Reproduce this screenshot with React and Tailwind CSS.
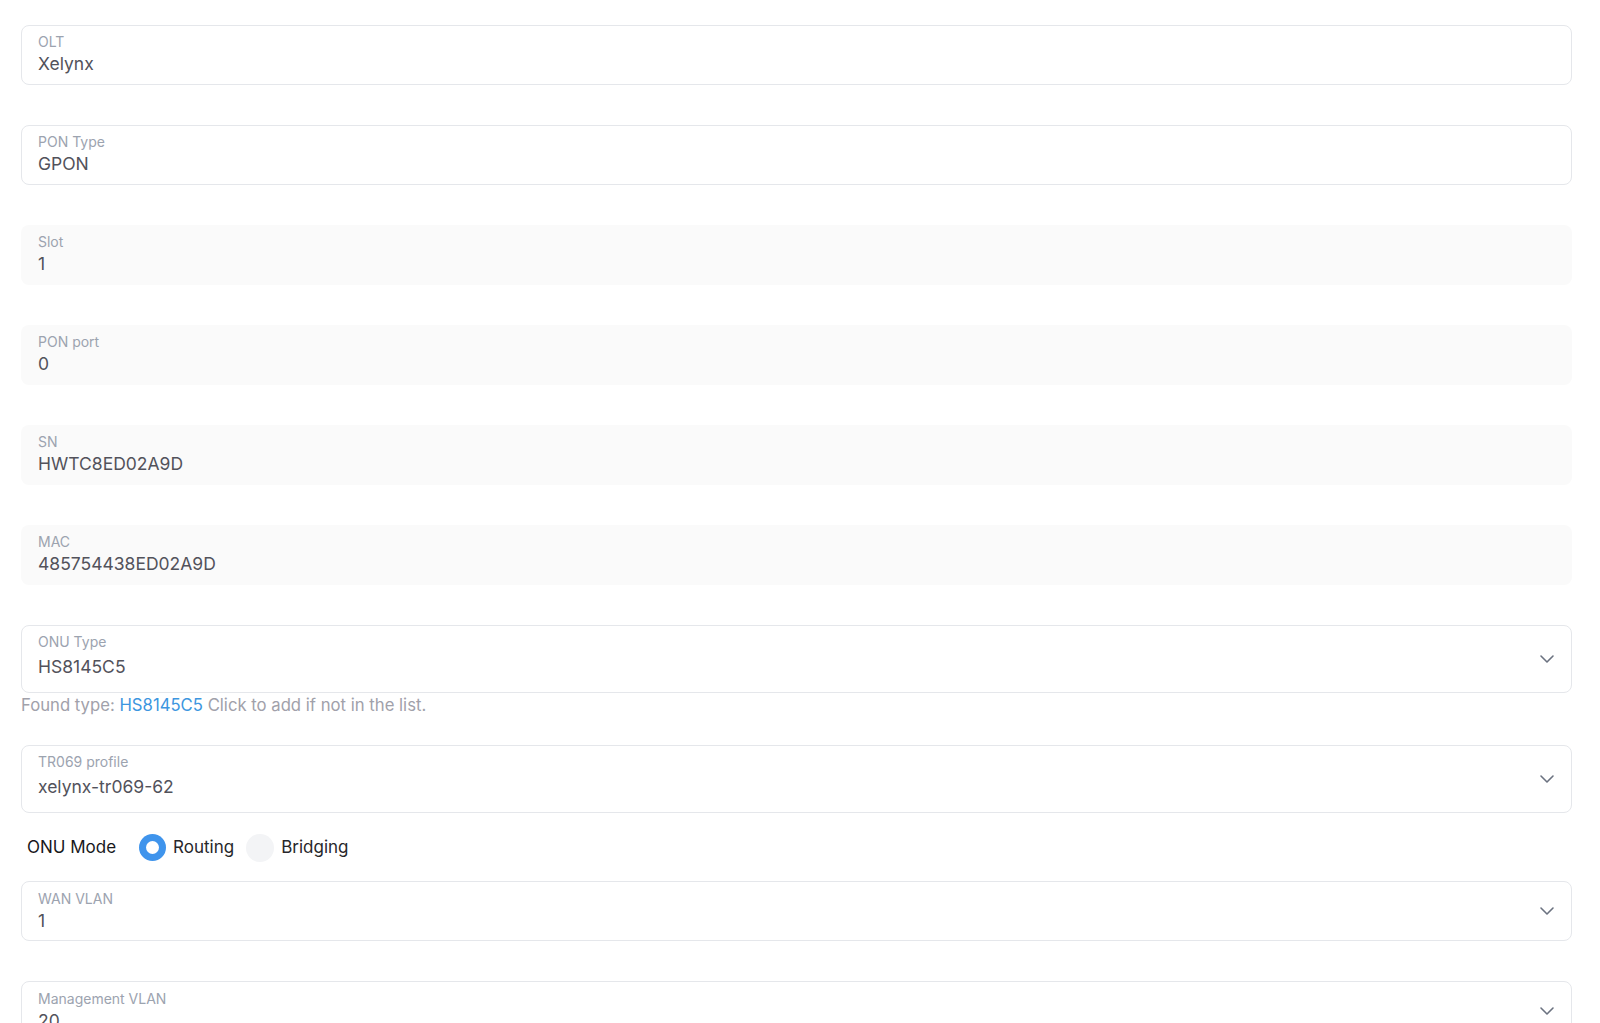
import { ChevronDown } from 'lucide-react'

const readOnly = [
  { label: 'OLT', value: 'Xelynx', bordered: true },
  { label: 'PON Type', value: 'GPON', bordered: true },
  { label: 'Slot', value: '1' },
  { label: 'PON port', value: '0' },
  { label: 'SN', value: 'HWTC8ED02A9D' },
  { label: 'MAC', value: '485754438ED02A9D' },
]

function StaticField({ label, value, bordered }) {
  return (
    <div
      className={`h-[60px] rounded-lg border px-4 pt-[6px] ${
        bordered ? 'border-[#e5e7eb] bg-white' : 'border-transparent bg-[#fafafa]'
      }`}
    >
      <div className="text-[14px] leading-5 text-[#9ca3af]">{label}</div>
      <div className="text-[17.5px] leading-6 text-[#52525b]">{value}</div>
    </div>
  )
}

function SelectField({ label, value, tall }) {
  return (
    <div
      className={`flex items-start justify-between rounded-lg border border-[#e5e7eb] bg-white pl-4 pr-3 ${
        tall ? 'h-[68px] pt-[6px]' : 'h-[60px] pt-[7px]'
      }`}
    >
      <div>
        <div className="text-[14px] leading-5 text-[#9ca3af]">{label}</div>
        <div className={`text-[17.5px] leading-6 text-[#52525b] ${tall ? 'mt-[3px]' : ''}`}>{value}</div>
      </div>
      <ChevronDown
        size={24}
        strokeWidth={1.6}
        className={`text-[#6b7280] ${tall ? 'mt-[15px]' : 'mt-[10px]'}`}
      />
    </div>
  )
}

function Radio({ checked, label }) {
  return (
    <label className="flex items-center gap-[7px]">
      {checked ? (
        <span className="flex h-[27px] w-[27px] items-center justify-center rounded-full bg-[#3f94ec]">
          <span className="h-[13px] w-[13px] rounded-full bg-white" />
        </span>
      ) : (
        <span className="h-[28px] w-[28px] rounded-full bg-[#f3f4f6]" />
      )}
      <span className="text-[17px] text-[#27272a]">{label}</span>
    </label>
  )
}

export default function App() {
  return (
    <div
      className="min-h-screen overflow-hidden bg-white pl-[21px] pr-[28px] pt-[25px]"
      style={{ fontFamily: 'Inter, "Noto Sans", sans-serif' }}
    >
      <div className="flex flex-col gap-10">
        {readOnly.map((f) => (
          <StaticField key={f.label} {...f} />
        ))}
      </div>

      <div className="mt-10">
        <SelectField label="ONU Type" value="HS8145C5" tall />
        <p className="text-[16.7px] leading-6 text-[#a1a1aa]">
          Found type: <span className="cursor-pointer text-[#3c96e0]">HS8145C5</span> Click to add if not in the list.
        </p>
      </div>

      <div className="mt-[28px]">
        <SelectField label="TR069 profile" value="xelynx-tr069-62" tall />
      </div>

      <div className="mt-[21px] flex h-[27px] items-center pl-[6px]">
        <span className="mr-[23px] text-[17px] text-[#18181b]">ONU Mode</span>
        <div className="flex items-center gap-3">
          <Radio checked label="Routing" />
          <Radio label="Bridging" />
        </div>
      </div>

      <div className="mt-[20px] flex flex-col gap-10">
        <SelectField label="WAN VLAN" value="1" />
        <SelectField label="Management VLAN" value="20" />
      </div>
      <div className="h-10" />
    </div>
  )
}
